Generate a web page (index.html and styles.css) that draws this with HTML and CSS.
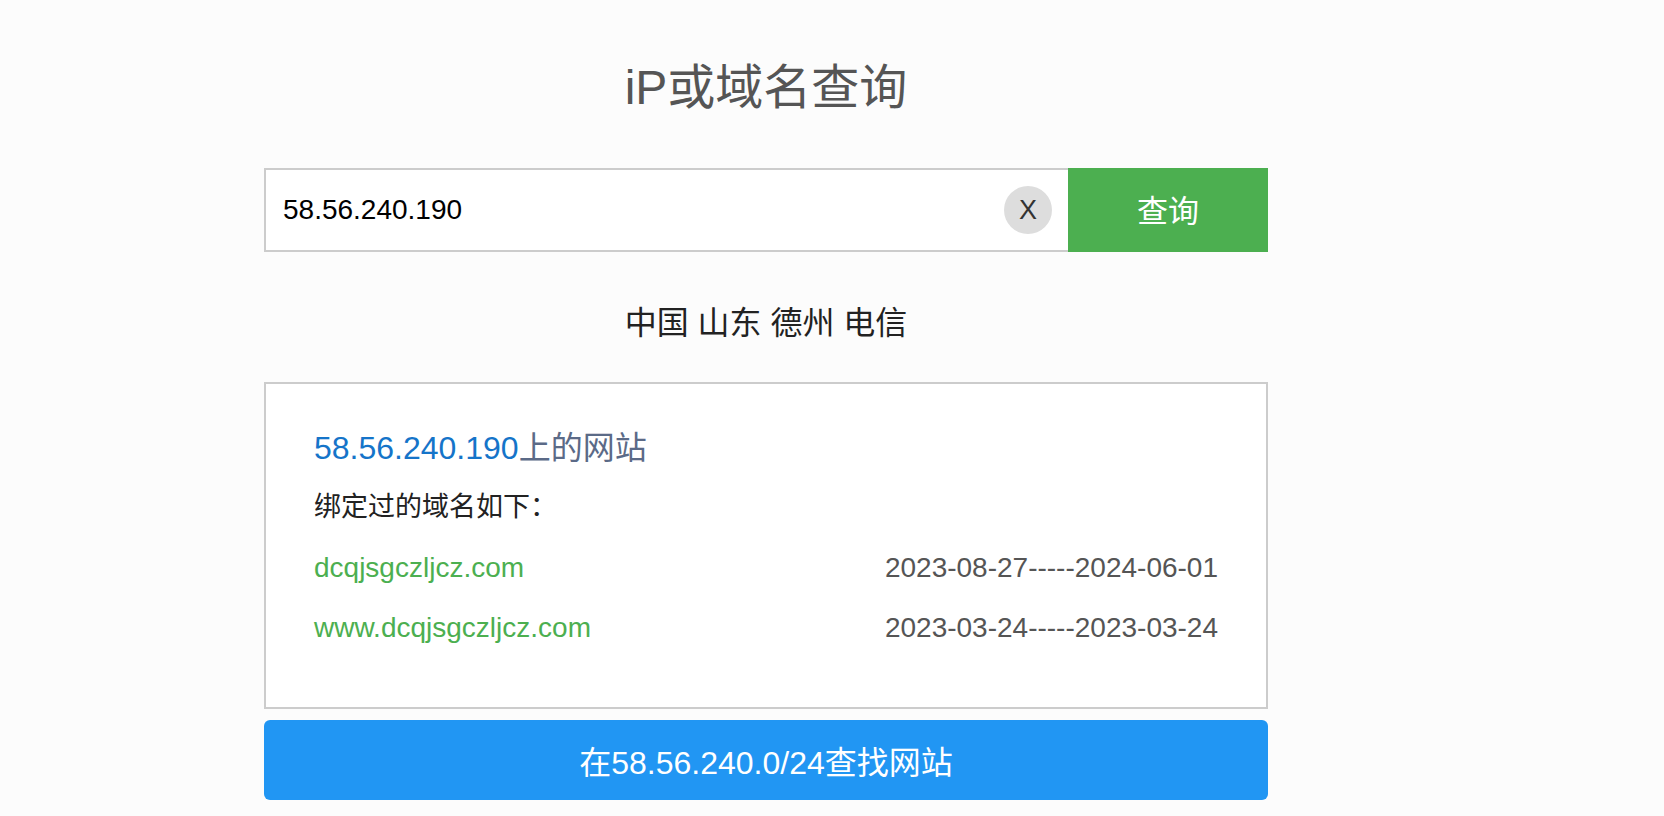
FILE: index.html
```html
<!DOCTYPE html>
<html lang="zh-CN">
<head>
<meta charset="utf-8">
<title>iP或域名查询</title>
<link rel="stylesheet" href="styles.css">
</head>
<body>
<div class="page">
  <h1 class="title">iP或域名查询</h1>
  <form class="search">
    <div class="field">
      <span class="field-text">58.56.240.190</span>
      <span class="clear">X</span>
    </div>
    <button type="button" class="submit">查询</button>
  </form>
  <p class="location">中国 山东 德州 电信</p>
  <div class="result">
    <h2 class="result-title"><span class="ip">58.56.240.190</span>上的网站</h2>
    <p class="result-sub">绑定过的域名如下：</p>
    <ul class="domains">
      <li class="domain-row"><a class="domain">dcqjsgczljcz.com</a><span class="date">2023-08-27-----2024-06-01</span></li>
      <li class="domain-row"><a class="domain">www.dcqjsgczljcz.com</a><span class="date">2023-03-24-----2023-03-24</span></li>
    </ul>
  </div>
  <button type="button" class="range">在58.56.240.0/24查找网站</button>
</div>
</body>
</html>
```
FILE: styles.css
```css
html, body {
  margin: 0;
  padding: 0;
  background: #fcfcfc;
  font-family: "Liberation Sans", "Noto Sans CJK SC", sans-serif;
}

.page {
  width: 1004px;
  margin-left: 264px;
  padding-top: 60px;
  display: flex;
  flex-direction: column;
}

.title {
  margin: 0;
  font-size: 48px;
  font-weight: normal;
  line-height: 56px;
  color: #555;
  text-align: center;
}

.search {
  margin: 52px 0 0;
  display: flex;
  height: 84px;
}

.field {
  flex: 1;
  display: flex;
  align-items: center;
  background: #fff;
  border: 2px solid #ccc;
  border-right: none;
  padding: 0 16px 0 17px;
}

.field-text {
  flex: 1;
  font-size: 28px;
  color: #000;
}

.clear {
  width: 48px;
  height: 48px;
  border-radius: 50%;
  background: #ddd;
  color: #333;
  font-size: 27px;
  display: flex;
  align-items: center;
  justify-content: center;
}

.submit {
  width: 200px;
  height: 84px;
  border: none;
  background: #4caf50;
  color: #fff;
  font-family: inherit;
  font-size: 31px;
  padding: 0 0 4px;
}

.location {
  margin: 51px 0 0;
  font-size: 32px;
  line-height: 40px;
  color: #222;
  text-align: center;
}

.result {
  margin-top: 39px;
  background: #fff;
  border: 2px solid #ccc;
  padding: 44px 48px 0;
  height: 327px;
  box-sizing: border-box;
}

.result-title {
  margin: 0;
  font-size: 32px;
  font-weight: normal;
  line-height: 40px;
  color: #5b6a87;
}

.ip {
  color: #1574c9;
}

.result-sub {
  margin: 21px 0 0;
  font-size: 27px;
  line-height: 36px;
  color: #222;
}

.domains {
  list-style: none;
  margin: 23px 0 0;
  padding: 0;
  display: flex;
  flex-direction: column;
  gap: 20px;
}

.domain-row {
  display: flex;
  justify-content: space-between;
  align-items: center;
  height: 40px;
  font-size: 28px;
}

.domain {
  color: #4caf50;
  text-decoration: none;
}

.date {
  color: #555;
}

.range {
  margin-top: 11px;
  height: 80px;
  border: none;
  border-radius: 6px;
  background: #2196f3;
  color: #fff;
  font-family: inherit;
  font-size: 32px;
  padding: 0;
}
```
